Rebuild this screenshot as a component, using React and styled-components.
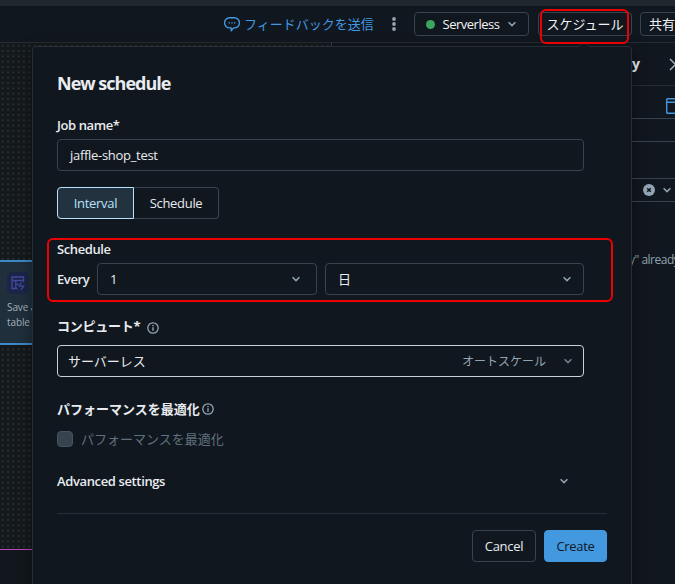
import React from "react";
import styled, { createGlobalStyle } from "styled-components";

const Chevron = ({ size = 10, color = "#92a4b3", width = 1.5 }) => (
  <Icon width={size} height={size} viewBox="0 0 10 10">
    <path d="M1.6 3.2 5 6.6l3.4-3.4" fill="none" stroke={color} strokeWidth={width} />
  </Icon>
);

const InfoIcon = () => (
  <Icon width="12" height="12" viewBox="0 0 12 12">
    <circle cx="6" cy="6" r="5.2" fill="none" stroke="#92a4b3" strokeWidth="1.3" />
    <path d="M6 5.3v3.5M6 3v1.3" stroke="#92a4b3" strokeWidth="1.4" />
  </Icon>
);

const SpeechIcon = () => (
  <Icon width="16" height="16" viewBox="0 0 16 16">
    <path
      d="M5.6 1.7h4.8a4.9 4.9 0 0 1 0 10.2H9.6L7.2 14.8v-2.9H5.6a4.9 4.9 0 0 1 0-10.2Z"
      fill="none"
      stroke="#4299e0"
      strokeWidth="1.4"
      strokeLinejoin="round"
    />
    <path d="M4.6 6.9H6M7.3 6.9h1.4M10 6.9h1.4" stroke="#4299e0" strokeWidth="1.4" />
  </Icon>
);

const KebabIcon = () => (
  <Icon width="4" height="16" viewBox="0 0 4 16">
    <circle cx="2" cy="3" r="1.9" fill="#92a4b3" />
    <circle cx="2" cy="8" r="1.9" fill="#92a4b3" />
    <circle cx="2" cy="13" r="1.9" fill="#92a4b3" />
  </Icon>
);

const TableIcon = () => (
  <Icon width="14" height="14" viewBox="0 0 14 14">
    <path
      d="M12.5 6V1H1v11.5h5.5M1 4.5h11.5M4.8 4.5v8M4.8 8.3h3"
      fill="none"
      stroke="#434a9e"
      strokeWidth="1.3"
    />
    <path d="m10.6 6.5-2.4 3.6h4.6L10 13.8" fill="none" stroke="#434a9e" strokeWidth="1.3" />
  </Icon>
);

const ClearIcon = () => (
  <Icon width="12" height="12" viewBox="0 0 12 12">
    <circle cx="6" cy="6" r="6" fill="#92a4b3" />
    <path d="m4.2 4.2 3.6 3.6m0-3.6L4.2 7.8" stroke="#11171c" strokeWidth="1.5" />
  </Icon>
);

const CloseIcon = () => (
  <Icon width="13" height="13" viewBox="0 0 13 13">
    <path d="m1 1 11 11M12 1 1 12" stroke="#a3b1bd" strokeWidth="1.5" />
  </Icon>
);

const CalendarIcon = () => (
  <Icon width="16" height="16" viewBox="0 0 16 16">
    <path
      d="M1.7.7h12.6a1 1 0 0 1 1 1v12.6a1 1 0 0 1-1 1H1.7a1 1 0 0 1-1-1V1.7a1 1 0 0 1 1-1ZM.7 4.2h14.6"
      fill="none"
      stroke="#4299e0"
      strokeWidth="1.4"
    />
  </Icon>
);

const App = () => {
  return (
    <Page>
      <GlobalStyle />
      <BrowserEdge />
      <TopBar>
        <Feedback>
          <SpeechIcon />
          <span>フィードバックを送信</span>
        </Feedback>
        <KebabIcon />
        <BarButton $width="115px" $left="18px">
          <StatusDot />
          <BarText>Serverless</BarText>
          <Chevron />
        </BarButton>
        <BarButton $width="94px" $left="9px">
          スケジュール
        </BarButton>
        <BarButton $width="60px" $left="8px" $align="flex-start">
          共有
        </BarButton>
      </TopBar>

      <Workspace>
        <LeftPane>
          <Canvas>
            <Node>
              <NodeIcon>
                <TableIcon />
              </NodeIcon>
              <NodeText>Save as table</NodeText>
            </Node>
          </Canvas>
          <Results />
        </LeftPane>
        <SidePane>
          <PaneRow $height="43px" $padding="1px">
            <PaneTitle>y</PaneTitle>
            <CloseIcon />
          </PaneRow>
          <PaneRow $height="33px" $line="#37444f" $padding="35px" $top="7px">
            <CalendarIcon />
          </PaneRow>
          <PaneRow $height="23px" $line="#37444f" />
          <PaneRow $height="37px" $line="#37444f" />
          <PaneRow $height="23px" $line="#37444f" $padding="12px">
            <ClearIcon />
            <Chevron />
          </PaneRow>
          <PaneMessage>y" already</PaneMessage>
        </SidePane>
      </Workspace>

      <Modal>
        <Title>New schedule</Title>
        <Label>Job name*</Label>
        <Field>
          <Value $spacing="-0.3px">jaffle-shop_test</Value>
        </Field>

        <Segments>
          <Segment $active $width="77px">
            Interval
          </Segment>
          <Segment $width="85px">Schedule</Segment>
        </Segments>

        <Label $top="20px">Schedule</Label>
        <EveryRow>
          <Label>Every</Label>
          <Field $width="220px">
            <Value>1</Value>
            <Chevron />
          </Field>
          <Field $width="259px">
            <Value>日</Value>
            <Chevron />
          </Field>
        </EveryRow>

        <ComputeLabel $top="21px" $bottom="9px" $gap="7px">
          <LabelText $spacing="-0.25px">コンピュート*</LabelText>
          <InfoIcon />
        </ComputeLabel>
        <Field $focus>
          <Value>サーバーレス</Value>
          <Hint>オートスケール</Hint>
          <Chevron color="#71818e" />
        </Field>

        <Label $top="22px" $bottom="10px" $gap="2px">
          <LabelText>パフォーマンスを最適化</LabelText>
          <InfoIcon />
        </Label>
        <CheckRow>
          <CheckBox />
          パフォーマンスを最適化
        </CheckRow>

        <Advanced>
          Advanced settings
          <Chevron />
        </Advanced>

        <Footer>
          <CancelButton>Cancel</CancelButton>
          <CreateButton>Create</CreateButton>
        </Footer>
      </Modal>
      <Pointer viewBox="0 0 12 6">
        <path d="M0 6 6 .5 12 6" />
      </Pointer>

      <Highlight $x={540} $y={9} $w={89} $h={35} />
      <Highlight $x={47} $y={238} $w={566} $h={64} />
    </Page>
  );
};

const GlobalStyle = createGlobalStyle`
  * {
    box-sizing: border-box;
  }

  body {
    margin: 0;
    background: #11171c;
  }

  button {
    font: inherit;
    letter-spacing: inherit;
  }
`;

const Icon = styled.svg`
  display: block;
  flex: none;
`;

const Page = styled.div`
  position: relative;
  width: 675px;
  height: 584px;
  overflow: hidden;
  display: flex;
  flex-direction: column;
  background: #11171e;
  color: #e8ecf0;
  font-family: "Open Sans", "Noto Sans CJK JP", sans-serif;
  font-size: 13px;
  line-height: 20px;
`;

const BrowserEdge = styled.div`
  height: 6px;
  flex: none;
  background: #20272e;
`;

const TopBar = styled.header`
  height: 37px;
  flex: none;
  display: flex;
  align-items: center;
  padding-left: 224px;
  border-bottom: 1px solid #242d34;
  white-space: nowrap;
`;

const Feedback = styled.div`
  display: flex;
  align-items: center;
  gap: 4px;
  width: 168px;
  flex: none;
  color: #4299e0;
`;

const BarButton = styled.button`
  width: ${(props) => props.$width};
  height: 24px;
  margin-left: ${(props) => props.$left};
  flex: none;
  display: flex;
  align-items: center;
  justify-content: ${(props) => props.$align || "center"};
  gap: 8px;
  padding: 0 8px;
  border: 1px solid #37444f;
  border-radius: 4px;
  background: transparent;
  color: #f1f4f6;
`;

const BarText = styled.span`
  letter-spacing: -0.5px;
`;

const StatusDot = styled.span`
  width: 9px;
  height: 9px;
  border-radius: 50%;
  background: #3ba65e;
`;

const Workspace = styled.main`
  flex: 1;
  display: flex;
`;

const LeftPane = styled.section`
  width: 332px;
  flex: none;
  display: flex;
  flex-direction: column;
  border-right: 1px solid #37444f;
`;

const Canvas = styled.div`
  height: 507px;
  padding-top: 217px;
  border-bottom: 1px solid #c044bb;
  background-color: #14191c;
  background-image: radial-gradient(circle, #293036 0.8px, transparent 1.2px);
  background-size: 5.33px 5.33px;
`;

const Results = styled.div`
  flex: 1;
  background: #11171c;
`;

const Node = styled.div`
  width: 60px;
  height: 85px;
  padding: 10px 7px;
  border: solid #3c88c9;
  border-width: 2px 0;
  background: #1f2f3c;
`;

const NodeIcon = styled.div`
  width: 22px;
  height: 22px;
  display: flex;
  align-items: center;
  justify-content: center;
  border-radius: 5px;
  background: #1c2548;
`;

const NodeText = styled.div`
  width: 45px;
  padding-top: 6px;
  color: #a5b1ba;
  font-size: 10px;
  line-height: 15px;
  letter-spacing: -0.1px;
`;

const SidePane = styled.aside`
  flex: 1;
  padding-left: 299px;
  overflow: hidden;
`;

const PaneRow = styled.div`
  height: ${(props) => props.$height};
  display: flex;
  align-items: center;
  gap: 7px;
  padding-left: ${(props) => props.$padding || "0"};
  padding-top: ${(props) => props.$top || "0"};
  border-bottom: 1px solid ${(props) => props.$line || "#242d34"};
`;

const PaneTitle = styled.div`
  width: 30px;
  flex: none;
  font-size: 14px;
  font-weight: 700;
`;

const PaneMessage = styled.div`
  margin-left: -2px;
  padding-top: 48px;
  color: #90a2b0;
  font-size: 12px;
  letter-spacing: -0.5px;
  white-space: nowrap;
`;

const Modal = styled.section`
  position: absolute;
  top: 46px;
  left: 32px;
  width: 600px;
  height: 560px;
  padding: 22px 24px;
  border: 1px solid #262e37;
  border-radius: 4px;
  background: #11171e;
  box-shadow: 0 4px 16px rgba(0, 0, 0, 0.4);
`;

const Title = styled.h2`
  margin: 0 0 18px;
  font-size: 18px;
  font-weight: 700;
  line-height: 28px;
  letter-spacing: -1px;
`;

const Label = styled.div`
  display: flex;
  align-items: center;
  gap: ${(props) => props.$gap || "0"};
  margin-top: ${(props) => props.$top || "0"};
  margin-bottom: ${(props) => props.$bottom || "4px"};
  font-weight: 600;
  letter-spacing: -0.4px;
`;

const ComputeLabel = styled(Label)`
  ${Icon} {
    margin-top: 3px;
  }
`;

const LabelText = styled.span`
  font-weight: 700;
  letter-spacing: ${(props) => props.$spacing || "0"};
`;

const Field = styled.div`
  width: ${(props) => props.$width || "527px"};
  height: 32px;
  display: flex;
  align-items: center;
  padding: 0 ${(props) => (props.$focus ? "10px" : "12px")};
  padding-right: ${(props) => (props.$focus ? "10px" : "15px")};
  border: 1px solid ${(props) => (props.$focus ? "#c9d1d9" : "#37444f")};
  border-radius: 4px;
`;

const Value = styled.span`
  flex: 1;
  letter-spacing: ${(props) => props.$spacing || "0"};
`;

const Hint = styled.span`
  margin-right: 17px;
  padding-top: 1px;
  color: #92a4b3;
  font-size: 12px;
`;

const Segments = styled.div`
  display: flex;
  margin-top: 16px;
`;

const Segment = styled.button`
  width: ${(props) => props.$width};
  height: 32px;
  padding: 0;
  border: 1px solid ${(props) => (props.$active ? "#bae1fc" : "#37444f")};
  border-left-width: ${(props) => (props.$active ? "1px" : "0")};
  border-radius: ${(props) => (props.$active ? "4px 0 0 4px" : "0 4px 4px 0")};
  background: ${(props) => (props.$active ? "#22323f" : "transparent")};
  color: ${(props) => (props.$active ? "#bae1fc" : "#e8ecf0")};
  letter-spacing: -0.3px;
`;

const EveryRow = styled.div`
  display: flex;
  align-items: center;
  gap: 8px;

  ${Label} {
    width: 32px;
    margin: 0;
  }

  ${Field} + ${Field} {
    padding-right: 11px;
  }
`;

const CheckRow = styled.div`
  display: flex;
  align-items: center;
  gap: 8px;
  color: #5f717f;
`;

const CheckBox = styled.span`
  width: 16px;
  height: 16px;
  border: 1px solid #44535f;
  border-radius: 4px;
  background: #37444f;
`;

const Advanced = styled.div`
  width: 512px;
  display: flex;
  align-items: center;
  justify-content: space-between;
  margin-top: 22px;
  font-weight: 600;
  letter-spacing: -0.37px;
`;

const Footer = styled.footer`
  display: flex;
  justify-content: flex-end;
  gap: 8px;
  margin-top: 22px;
  padding-top: 16px;
  border-top: 1px solid #262e37;
`;

const CancelButton = styled.button`
  width: 64px;
  height: 32px;
  padding: 0;
  border: 1px solid #37444f;
  border-radius: 4px;
  background: transparent;
  color: #e8ecf0;
  letter-spacing: -0.3px;
`;

const CreateButton = styled(CancelButton)`
  width: 63px;
  border-color: #4299e0;
  background: #4299e0;
  color: #11171e;
`;

const Pointer = styled.svg`
  position: absolute;
  top: 41px;
  left: 578px;
  width: 12px;
  height: 6px;
  fill: #11171e;
  stroke: #262e37;
`;

const Highlight = styled.div`
  position: absolute;
  left: ${(props) => props.$x}px;
  top: ${(props) => props.$y}px;
  width: ${(props) => props.$w}px;
  height: ${(props) => props.$h}px;
  border: 2px solid #ec0000;
  border-radius: 6px;
`;

export default App;
